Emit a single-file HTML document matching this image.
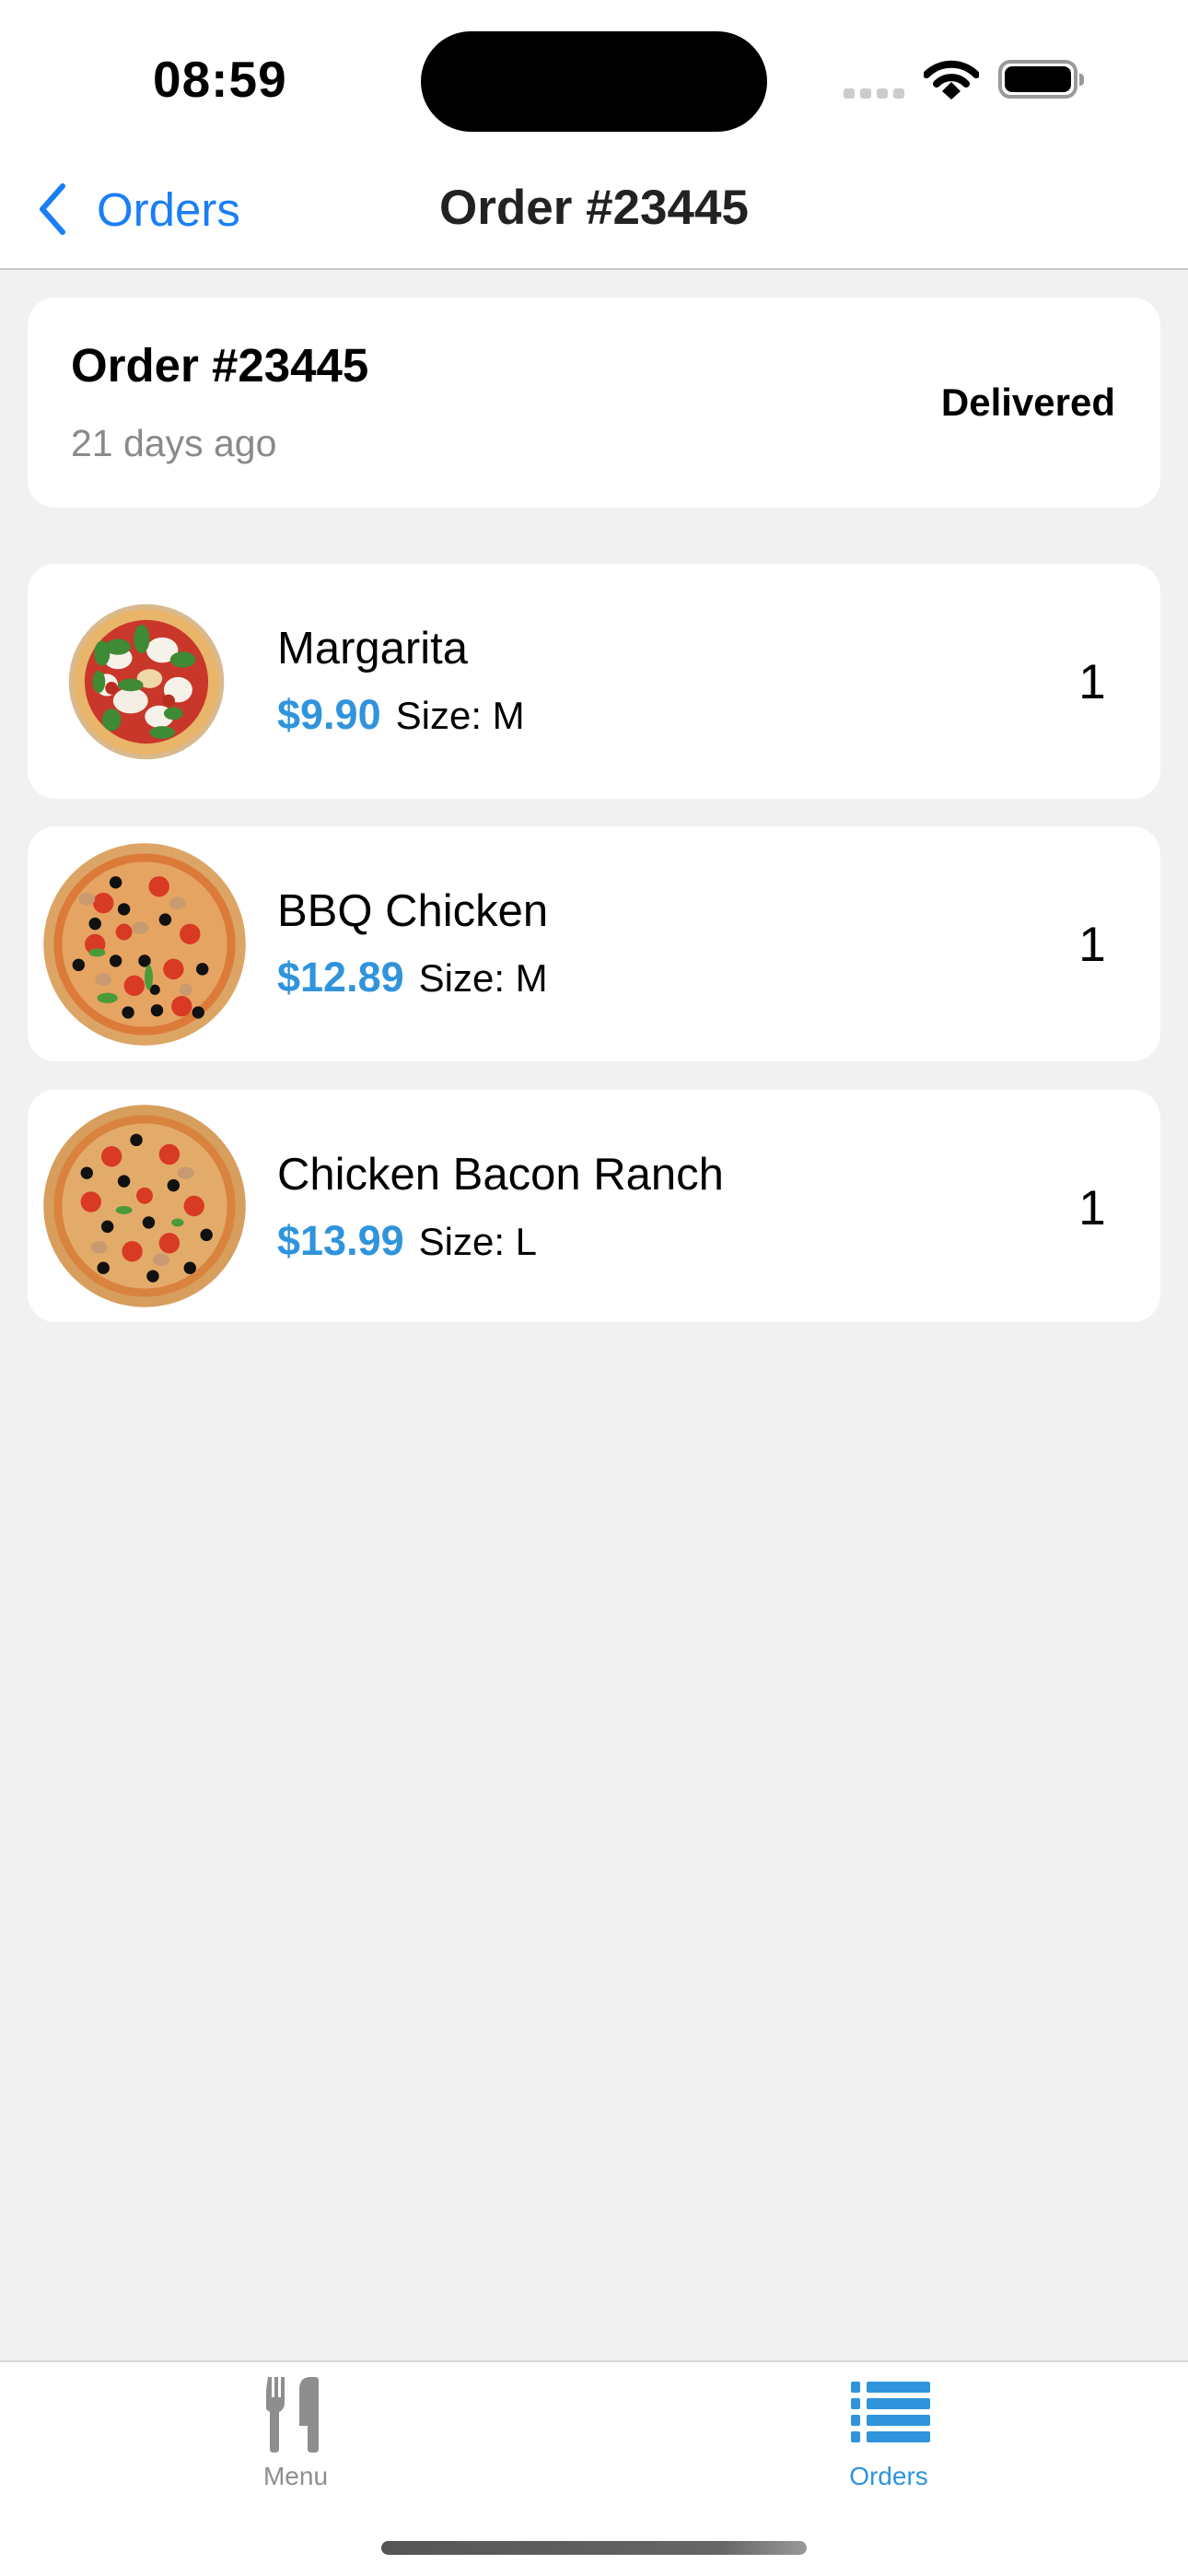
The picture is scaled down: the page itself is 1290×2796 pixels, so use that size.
<!DOCTYPE html>
<html><head><meta charset="utf-8"><style>
*{margin:0;padding:0;box-sizing:border-box}
body{width:1290px;height:2796px;background:#f1f1f1;font-family:"Liberation Sans",sans-serif;position:relative;overflow:hidden;color:#000}
.abs{position:absolute}
.top{left:0;top:0;width:1290px;height:293px;background:#fff;border-bottom:2px solid #c8c8c8}
.card{position:absolute;left:30px;width:1230px;background:#fff;border-radius:30px}
.name{position:absolute;left:271px;font-size:49px;white-space:nowrap}
.price{position:absolute;left:271px;font-size:42px;white-space:nowrap}
.price b{color:#2f94dc;margin-right:16px;font-size:45px}
.qty{position:absolute;left:1136px;font-size:53px;width:40px;text-align:center}
.tab{left:0;top:2562px;width:1290px;height:234px;background:#fff;border-top:2px solid #d9d9d9}
</style></head><body>
<div class="abs top"></div>
<div class="abs" style="left:166px;top:54px;font-size:55px;font-weight:bold;letter-spacing:1px">08:59</div>
<div class="abs" style="left:457px;top:34px;width:376px;height:109px;background:#000;border-radius:55px"></div>
<div class="abs" style="left:916px;top:96px;width:12px;height:11px;background:#ccc;border-radius:3px"></div>
<div class="abs" style="left:934px;top:96px;width:12px;height:11px;background:#ccc;border-radius:3px"></div>
<div class="abs" style="left:952px;top:96px;width:12px;height:11px;background:#ccc;border-radius:3px"></div>
<div class="abs" style="left:970px;top:96px;width:12px;height:11px;background:#ccc;border-radius:3px"></div>
<svg class="abs" style="left:1003px;top:64px" width="60" height="44" viewBox="0 0 60 44">
<path d="M3 17 A38 38 0 0 1 57 17" fill="none" stroke="#000" stroke-width="8" stroke-linecap="round"/>
<path d="M14 27 A22 22 0 0 1 46 27" fill="none" stroke="#000" stroke-width="8" stroke-linecap="round"/>
<path d="M20 35 L30 25 L40 35 L30 44 Z" fill="#000"/></svg>
<div class="abs" style="left:1084px;top:65px;width:86px;height:42px;border:4px solid #999;border-radius:13px"></div>
<div class="abs" style="left:1091px;top:72px;width:72px;height:28px;background:#000;border-radius:8px"></div>
<div class="abs" style="left:1172px;top:80px;width:5px;height:13px;background:#999;border-radius:0 4px 4px 0"></div>

<svg class="abs" style="left:38px;top:198px" width="36" height="58" viewBox="0 0 36 58"><path d="M30 4 L8 29 L30 54" fill="none" stroke="#1a7ef5" stroke-width="6" stroke-linecap="round" stroke-linejoin="round"/></svg>
<div class="abs" style="left:105px;top:198px;font-size:51px;color:#1a7ef5">Orders</div>
<div class="abs" style="left:0;width:1290px;top:195px;text-align:center;font-size:53px;font-weight:bold;color:#222">Order #23445</div>

<div class="card" style="top:323px;height:228px">
<div class="abs" style="left:47px;top:44px;font-size:51px;font-weight:bold">Order #23445</div>
<div class="abs" style="left:47px;top:135px;font-size:41px;color:#8a8a8a">21 days ago</div>
<div class="abs" style="right:49px;top:90px;font-size:42px;font-weight:bold">Delivered</div>
</div>

<div class="card" style="top:612px;height:255px">
<svg class="abs" style="left:43px;top:42px" width="172" height="172" viewBox="0 0 100 100">
<circle cx="50" cy="50" r="49" fill="#d9b98e"/><circle cx="50" cy="50" r="46" fill="#e8b56b"/><circle cx="50" cy="50" r="39" fill="#c8372a"/>
<ellipse cx="32" cy="35" rx="9" ry="7" fill="#f6f2ea"/><ellipse cx="60" cy="30" rx="10" ry="8" fill="#f6f2ea"/><ellipse cx="70" cy="55" rx="9" ry="8" fill="#f6f2ea"/><ellipse cx="40" cy="62" rx="11" ry="8" fill="#f4efe4"/><ellipse cx="58" cy="72" rx="9" ry="7" fill="#f6f2ea"/><ellipse cx="25" cy="52" rx="7" ry="7" fill="#f6f2ea"/><ellipse cx="52" cy="48" rx="8" ry="6" fill="#efd9a8"/>
<ellipse cx="47" cy="23" rx="5" ry="9" fill="#3f8a35"/><ellipse cx="22" cy="32" rx="5" ry="8" fill="#3f8a35"/><ellipse cx="32" cy="28" rx="8" ry="5" fill="#3f8a35"/><ellipse cx="73" cy="36" rx="8" ry="5" fill="#3f8a35"/><ellipse cx="40" cy="52" rx="8" ry="4" fill="#3f8a35"/><ellipse cx="28" cy="74" rx="6" ry="7" fill="#3f8a35"/><ellipse cx="60" cy="82" rx="8" ry="4" fill="#3f8a35"/><ellipse cx="20" cy="50" rx="4" ry="7" fill="#3f8a35"/><ellipse cx="67" cy="70" rx="6" ry="4" fill="#3f8a35"/>
<circle cx="28" cy="54" r="4" fill="#b82d20"/><circle cx="64" cy="62" r="4" fill="#b82d20"/></svg>
<div class="name" style="top:64px">Margarita</div>
<div class="price" style="top:138px"><b>$9.90</b>Size: M</div>
<div class="qty" style="top:98px">1</div>
</div>

<div class="card" style="top:897px;height:255px">
<svg class="abs" style="left:15px;top:16px" width="224" height="224" viewBox="0 0 100 100">
<circle cx="50" cy="50" r="49" fill="#dca565"/><circle cx="50" cy="50" r="44" fill="#dc7a3a"/><circle cx="50" cy="50" r="40" fill="#e6a463"/>
<circle cx="30" cy="30" r="5" fill="#d83a24"/><circle cx="57" cy="22" r="5" fill="#d83a24"/><circle cx="72" cy="45" r="5" fill="#d83a24"/><circle cx="26" cy="50" r="5" fill="#d83a24"/><circle cx="45" cy="70" r="5" fill="#d83a24"/><circle cx="64" cy="62" r="5" fill="#d83a24"/><circle cx="68" cy="80" r="5" fill="#d83a24"/><circle cx="40" cy="44" r="4" fill="#d83a24"/>
<circle cx="36" cy="20" r="3" fill="#111"/><circle cx="26" cy="40" r="3" fill="#111"/><circle cx="40" cy="33" r="3" fill="#111"/><circle cx="60" cy="38" r="3" fill="#111"/><circle cx="50" cy="58" r="3" fill="#111"/><circle cx="36" cy="58" r="3" fill="#111"/><circle cx="18" cy="60" r="3" fill="#111"/><circle cx="78" cy="62" r="3" fill="#111"/><circle cx="76" cy="83" r="3" fill="#111"/><circle cx="56" cy="82" r="3" fill="#111"/><circle cx="42" cy="83" r="3" fill="#111"/><circle cx="55" cy="72" r="2.5" fill="#111"/>
<ellipse cx="22" cy="28" rx="4" ry="3" fill="#c89a70"/><ellipse cx="48" cy="42" rx="4" ry="3" fill="#c89a70"/><ellipse cx="66" cy="30" rx="4" ry="3" fill="#c89a70"/><ellipse cx="30" cy="67" rx="4" ry="3" fill="#c89a70"/><ellipse cx="70" cy="72" rx="3" ry="3" fill="#c89a70"/>
<ellipse cx="32" cy="76" rx="5" ry="2.5" fill="#4b9a3a"/><ellipse cx="52" cy="66" rx="2" ry="6" fill="#4b9a3a"/><ellipse cx="27" cy="54" rx="4" ry="2" fill="#4b9a3a"/></svg>
<div class="name" style="top:64px">BBQ Chicken</div>
<div class="price" style="top:138px"><b>$12.89</b>Size: M</div>
<div class="qty" style="top:98px">1</div>
</div>

<div class="card" style="top:1183px;height:252px">
<svg class="abs" style="left:15px;top:14px" width="224" height="224" viewBox="0 0 100 100">
<circle cx="50" cy="50" r="49" fill="#d79e5d"/><circle cx="50" cy="50" r="44" fill="#d9833f"/><circle cx="50" cy="50" r="40" fill="#e3ab6a"/>
<circle cx="34" cy="26" r="5" fill="#d83a24"/><circle cx="62" cy="25" r="5" fill="#d83a24"/><circle cx="74" cy="50" r="5" fill="#d83a24"/><circle cx="24" cy="48" r="5" fill="#d83a24"/><circle cx="44" cy="72" r="5" fill="#d83a24"/><circle cx="62" cy="68" r="5" fill="#d83a24"/><circle cx="50" cy="45" r="4" fill="#d83a24"/>
<circle cx="46" cy="18" r="3" fill="#111"/><circle cx="22" cy="34" r="3" fill="#111"/><circle cx="40" cy="38" r="3" fill="#111"/><circle cx="64" cy="40" r="3" fill="#111"/><circle cx="52" cy="58" r="3" fill="#111"/><circle cx="32" cy="60" r="3" fill="#111"/><circle cx="80" cy="64" r="3" fill="#111"/><circle cx="72" cy="80" r="3" fill="#111"/><circle cx="30" cy="80" r="3" fill="#111"/><circle cx="54" cy="84" r="3" fill="#111"/>
<ellipse cx="28" cy="70" rx="4" ry="3" fill="#c89a70"/><ellipse cx="70" cy="34" rx="4" ry="3" fill="#c89a70"/><ellipse cx="58" cy="76" rx="4" ry="3" fill="#c89a70"/>
<ellipse cx="40" cy="52" rx="4" ry="2" fill="#4b9a3a"/><ellipse cx="66" cy="58" rx="3" ry="2" fill="#4b9a3a"/></svg>
<div class="name" style="top:64px">Chicken Bacon Ranch</div>
<div class="price" style="top:138px"><b>$13.99</b>Size: L</div>
<div class="qty" style="top:98px">1</div>
</div>

<div class="abs tab"></div>
<svg class="abs" style="left:289px;top:2580px" width="70" height="82" viewBox="0 0 70 82">
<path d="M2 0 h4 v22 h3 v-22 h4 v22 h3 v-22 h4 v28 q0 7 -6 10 v40 q0 4 -4 4 h-2 q-4 0 -4 -4 v-40 q-6 -3 -6 -10 z" fill="#8e8e8e"/>
<path d="M36 14 q0 -14 12 -14 h5 q4 0 4 4 v74 q0 4 -4 4 h-4 q-4 0 -4 -4 v-25 h-9 z" fill="#8e8e8e"/></svg>
<div class="abs" style="left:271px;width:100px;top:2672px;text-align:center;font-size:28px;color:#8e8e8e">Menu</div>
<svg class="abs" style="left:924px;top:2585px" width="86" height="68" viewBox="0 0 86 68">
<g fill="#2f94dc"><rect x="0" y="0" width="10" height="12" rx="2"/><rect x="17" y="0" width="69" height="12" rx="2"/>
<rect x="0" y="18" width="10" height="12" rx="2"/><rect x="17" y="18" width="69" height="12" rx="2"/>
<rect x="0" y="36" width="10" height="12" rx="2"/><rect x="17" y="36" width="69" height="12" rx="2"/>
<rect x="0" y="54" width="10" height="12" rx="2"/><rect x="17" y="54" width="69" height="12" rx="2"/></g></svg>
<div class="abs" style="left:905px;width:120px;top:2672px;text-align:center;font-size:28px;color:#2f94dc">Orders</div>
<div class="abs" style="left:414px;top:2758px;width:462px;height:15px;border-radius:8px;background:linear-gradient(90deg,#555,#666 80%,#999)"></div>
</body></html>
